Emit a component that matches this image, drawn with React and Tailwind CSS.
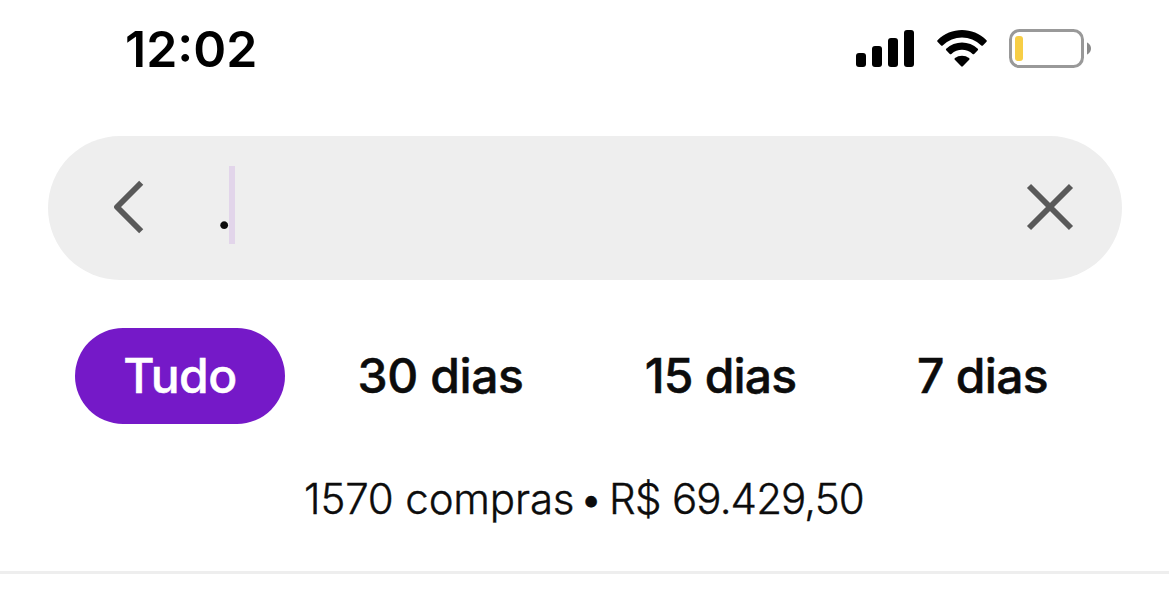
import React from "react";

function Signal() {
  return (
    <svg className="block h-[37px] w-[58px]" viewBox="0 0 58 37" fill="#000">
      <rect x="0" y="23" width="10" height="14" rx="3" />
      <rect x="16" y="16" width="10" height="21" rx="3" />
      <rect x="32" y="8" width="10" height="29" rx="3" />
      <rect x="48" y="0" width="10" height="37" rx="3" />
    </svg>
  );
}

function Wifi() {
  return (
    <svg className="block h-[37px] w-[50px]" viewBox="0 0 50 37" fill="#000">
      <path d="M.5 10.2C14-3.3 36-3.3 49.5 10.2Q50.2 11 49.5 11.7L45.9 15.4Q45.1 16.1 44.3 15.4C33.5 4.7 16.5 4.7 5.7 15.4Q4.9 16.1 4.1 15.4L.5 11.7Q-.2 11 .5 10.2Z" />
      <path d="M9.2 18.8C18 10.5 32 10.5 40.8 18.8Q41.5 19.6 40.8 20.3L37.2 23.9Q36.4 24.6 35.6 23.9C29.5 18.5 20.5 18.5 14.4 23.9Q13.6 24.6 12.8 23.9L9.2 20.3Q8.5 19.6 9.2 18.8Z" />
      <path d="M17.9 28.1C21.8 24.8 28.2 24.8 32.1 28.1Q33 29 32.2 29.8L25.8 36.3Q25 37 24.2 36.3L17.8 29.8Q17 29 17.9 28.1Z" />
    </svg>
  );
}

function Battery() {
  return (
    <svg className="block h-[39px] w-[83px]" viewBox="0 0 83 39">
      <rect x="1.5" y="1.5" width="72" height="36" rx="9" fill="none" stroke="#999" strokeWidth="3" />
      <rect x="6" y="7" width="8" height="25" rx="3" fill="#f7ce46" />
      <path d="M78 13.5C79.5 14 82 16.2 82 19.5S79.5 25 78 25.5Z" fill="#8a8a8a" />
    </svg>
  );
}

const chip = "flex h-24 items-center justify-center rounded-full text-[48px] font-medium [-webkit-text-stroke:0.5px]";

export default function App() {
  return (
    <div className="h-[597px] w-[1169px] overflow-hidden bg-white font-['Inter',sans-serif] leading-none whitespace-nowrap text-[#0c0c0c]">
      <header className="flex h-[136px] items-start justify-between pr-[77px] pl-[125px]">
        <time className="pt-[24px] text-[50px] font-semibold text-black">12:02</time>
        <div className="flex pt-[29px]">
          <div className="mt-px mr-[23px]"><Signal /></div>
          <div className="mt-px mr-[22px]"><Wifi /></div>
          <Battery />
        </div>
      </header>

      <div className="mx-12 flex h-36 w-[1074px] items-center rounded-full bg-[#eee] pr-[48px] pb-[2px] pl-[65px]">
        <button aria-label="Voltar">
          <svg className="block h-[54px] w-[32px]" viewBox="0 0 32 54" fill="none" stroke="#595959" strokeWidth="5.8" strokeLinejoin="round">
            <path d="M28.2 2.8L4 27L28.2 51.2" />
          </svg>
        </button>
        <div className="ml-[71px] w-[13px] pt-[5px] text-[54px] font-medium">.</div>
        <div className="mb-[4px] h-[78px] w-[6px] bg-[#e2d5ea]" />
        <button aria-label="Limpar" className="ml-auto">
          <svg className="block h-[48px] w-[48px]" viewBox="0 0 48 48" fill="none" stroke="#595959" strokeWidth="5.8">
            <path d="M3 3L45 45M45 3L3 45" />
          </svg>
        </button>
      </div>

      <nav className="mt-12 ml-[75px] flex gap-6">
        <button className={`${chip} w-[210px] bg-[#7519c8] tracking-[-0.5px] text-white`}>Tudo</button>
        <button className={`${chip} w-[263px] tracking-[-0.4px]`}>30 dias</button>
        <button className={`${chip} w-[249px] tracking-[-0.8px]`}>15 dias</button>
        <button className={`${chip} w-[227px] tracking-[-0.7px]`}>7 dias</button>
      </nav>

      <div className="flex h-[150px] items-center border-b-[3px] border-[#eee] pt-[3px] pl-[304px] text-[42px] font-light [-webkit-text-stroke:0.4px]">
        <span className="w-[277px] tracking-[-0.15px]">1570 compras</span>
        <span className="w-[28px] text-[36px] font-normal">•</span>
        <span className="w-[63px] tracking-[-0.6px]">R$</span>
        <span className="tracking-[-0.9px]">69.429,50</span>
      </div>
    </div>
  );
}
